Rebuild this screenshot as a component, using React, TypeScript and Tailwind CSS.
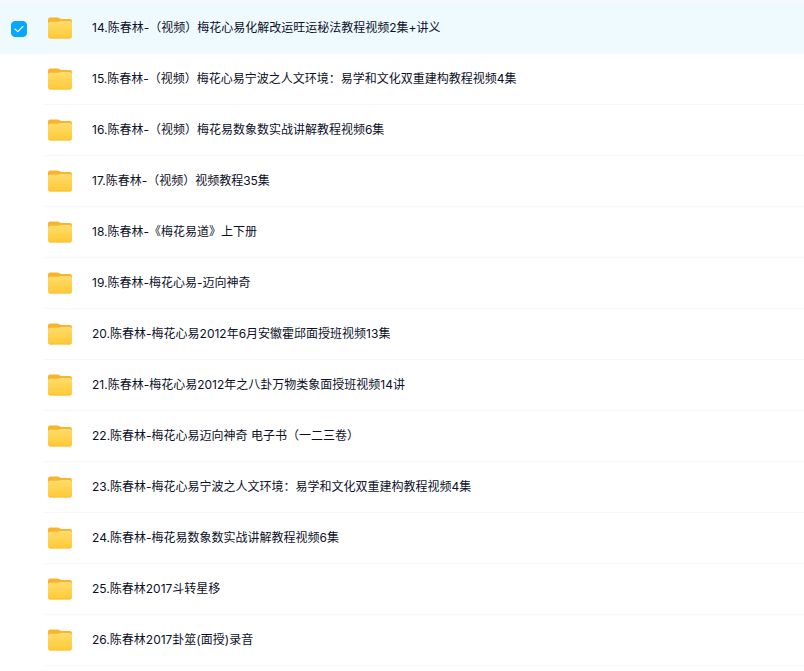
import React, { useState } from 'react';

interface FileItem {
  id: number;
  name: string;
}

const files: FileItem[] = [
  { id: 14, name: '14.陈春林-（视频）梅花心易化解改运旺运秘法教程视频2集+讲义' },
  { id: 15, name: '15.陈春林-（视频）梅花心易宁波之人文环境：易学和文化双重建构教程视频4集' },
  { id: 16, name: '16.陈春林-（视频）梅花易数象数实战讲解教程视频6集' },
  { id: 17, name: '17.陈春林-（视频）视频教程35集' },
  { id: 18, name: '18.陈春林-《梅花易道》上下册' },
  { id: 19, name: '19.陈春林-梅花心易-迈向神奇' },
  { id: 20, name: '20.陈春林-梅花心易2012年6月安徽霍邱面授班视频13集' },
  { id: 21, name: '21.陈春林-梅花心易2012年之八卦万物类象面授班视频14讲' },
  { id: 22, name: '22.陈春林-梅花心易迈向神奇 电子书（一二三卷）' },
  { id: 23, name: '23.陈春林-梅花心易宁波之人文环境：易学和文化双重建构教程视频4集' },
  { id: 24, name: '24.陈春林-梅花易数象数实战讲解教程视频6集' },
  { id: 25, name: '25.陈春林2017斗转星移' },
  { id: 26, name: '26.陈春林2017卦筮(面授)录音' }
];

const FolderIcon: React.FC = () => (
  <svg width="24" height="22" viewBox="0 0 24 22" className="shrink-0" aria-hidden="true">
    <defs>
      <linearGradient id="folderFront" x1="0" y1="0" x2="0" y2="1">
        <stop offset="0" stopColor="#ffdc6c" />
        <stop offset="0.5" stopColor="#ffd350" />
        <stop offset="1" stopColor="#ffc936" />
      </linearGradient>
    </defs>
    <path d="M0 2.600A2.200 2.200 0 0 1 2.200.4h7.300c.7 0 1.200.2 1.700.6l.7.6c.4.3.8.4 1.400.4h8.500A2.200 2.200 0 0 1 24 4.200V10H0z" fill="#f8b42c" />
    <path d="M0 7c0-1.400.9-2.200 2.300-2.200h7c.8 0 1.300-.1 2-.4.800-.3 1.400-.4 2.200-.4h8.200c1.400 0 2.300.9 2.300 2.300v12.900a2.200 2.200 0 0 1-2.200 2.200H2.200A2.200 2.200 0 0 1 0 19.200z" fill="url(#folderFront)" />
    <path d="M.3 19.700c.4.800 1 1.300 1.900 1.300h19.600c.9 0 1.500-.5 1.900-1.300" fill="none" stroke="#fabd35" strokeWidth="0.800" />
  </svg>
);

interface FileRowProps {
  file: FileItem;
  checked: boolean;
  onToggle: (id: number) => void;
}

const FileRow: React.FC<FileRowProps> = ({ file, checked, onToggle }) => (
  <li className={`group flex h-[51px] ${checked ? 'bg-[#effaff]' : 'bg-white'}`}>
    <div className="flex w-11 shrink-0 items-center pl-[11px]">
      <div className="relative h-4 w-4">
        <input
          id={`file-${file.id}`}
          type="checkbox"
          checked={checked}
          onChange={() => onToggle(file.id)}
          aria-label={file.name}
          className="block h-4 w-4 cursor-pointer appearance-none rounded border border-[#d4d7de] opacity-0 checked:border-[#06a7ff] checked:bg-[#06a7ff] checked:opacity-100 group-hover:opacity-100"
        />
        {checked && (
          <svg viewBox="0 0 16 16" className="pointer-events-none absolute inset-0 h-4 w-4" aria-hidden="true">
            <path d="M4 8l2.800 2.700L12 5.300" fill="none" stroke="#fff" strokeWidth="1.100" strokeLinecap="round" strokeLinejoin="round" />
          </svg>
        )}
      </div>
    </div>
    <div className={`flex min-w-0 flex-1 items-center gap-5 border-b pl-1 ${checked ? 'border-[#f3f9fd]' : 'border-[#f8f8fa]'}`}>
      <FolderIcon />
      <a href={`#file-${file.id}`} className="truncate text-xs text-[#0b1026] hover:text-[#06a7ff]">
        {file.name}
      </a>
    </div>
  </li>
);

const App: React.FC = () => {
  const [selected, setSelected] = useState<number[]>([14]);

  const toggle = (id: number) => {
    setSelected((prev) => (prev.includes(id) ? prev.filter((item) => item !== id) : [...prev, id]));
  };

  return (
    <main className="min-h-screen bg-white font-[Inter,'Noto_Sans_CJK_SC',sans-serif]">
      <ul className="border-t-3 border-[#f6f8fe]">
        {files.map((file) => (
          <FileRow key={file.id} file={file} checked={selected.includes(file.id)} onToggle={toggle} />
        ))}
      </ul>
    </main>
  );
};

export default App;
